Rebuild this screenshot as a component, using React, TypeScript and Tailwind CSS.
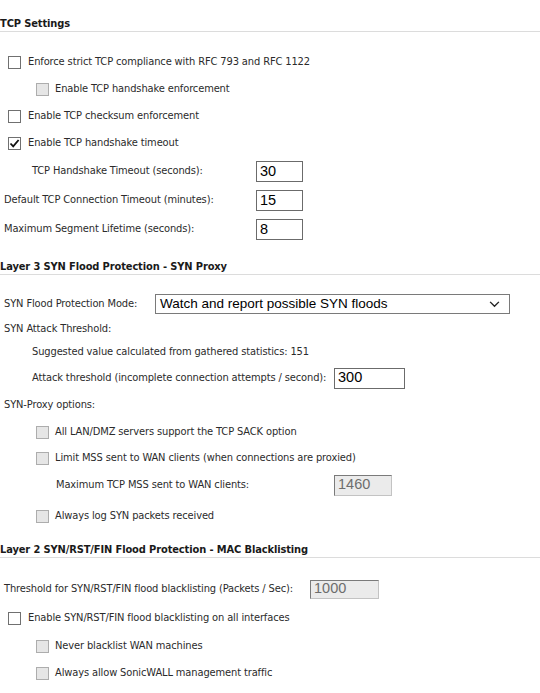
import React from 'react';

const labelFont = { fontFamily: '"DejaVu Sans Condensed", "Liberation Sans", sans-serif' };

type BoxProps = { checked?: boolean; disabled?: boolean };

const Box: React.FC<BoxProps> = ({ checked, disabled }) => (
  <span
    className={
      'relative inline-block w-[13px] h-[13px] shrink-0 border ' +
      (disabled ? 'bg-[#e6e6e6] border-[#adadad]' : 'bg-white border-[#707070]')
    }
  >
    {checked && (
      <svg viewBox="0 0 13 13" className="absolute left-[-1px] top-[-1px] w-[13px] h-[13px]">
        <path d="M2.5 6.5 L5.2 9.4 L10.6 3" fill="none" stroke="#111" strokeWidth="1.8" />
      </svg>
    )}
  </span>
);

const CheckRow: React.FC<BoxProps & { label: string; indent?: boolean; h: string }> = ({ label, indent, h, ...box }) => (
  <div className={`flex items-center ${h} ${indent ? 'pl-[36px]' : 'pl-[8px]'}`}>
    <Box {...box} />
    <span className={indent ? 'ml-[6px]' : 'ml-[7px]'}>{label}</span>
  </div>
);

const Heading: React.FC<{ title: string; pt: string }> = ({ title, pt }) => (
  <div className={`${pt} leading-[15px] font-bold text-[#1a1a1a] border-b border-[#dcdcdc]`}>{title}</div>
);

const TextBox: React.FC<{ value: string; w: string; disabled?: boolean; h?: string }> = ({ value, w, disabled, h = 'h-[21px]' }) => (
  <div
    className={
      `${w} ${h} flex items-center pl-[3px] text-[14.5px] tracking-normal ` +
      (disabled
        ? 'bg-[#ebebeb] text-[#6d6d6d] border border-[#c3c3c3] border-t-[#7a7a7a] border-l-[#7a7a7a]'
        : 'bg-white text-black border border-[#6b6b6b]')
    }
    style={{ fontFamily: '"Liberation Sans", Arial, sans-serif' }}
  >
    {value}
  </div>
);

const FieldRow: React.FC<{ label: string; value: string; labelW: string; pl: string; h: string; inputW: string; disabled?: boolean; inputH?: string }> = ({
  label,
  value,
  labelW,
  pl,
  h,
  inputW,
  disabled,
  inputH,
}) => (
  <div className={`flex items-center ${h}`}>
    <div className={`${labelW} ${pl} shrink-0`}>{label}</div>
    <TextBox value={value} w={inputW} disabled={disabled} h={inputH} />
  </div>
);

export default function App() {
  return (
    <div className="w-[540px] h-[693px] bg-white text-[11px] tracking-[-0.12px] text-[#2b2b2b] overflow-hidden" style={labelFont}>
      <Heading title="TCP Settings" pt="pt-[16px]" />

      <div className="mt-[17px]">
        <CheckRow h="h-[27px]" label="Enforce strict TCP compliance with RFC 793 and RFC 1122" />
        <CheckRow h="h-[27px]" indent disabled label="Enable TCP handshake enforcement" />
        <CheckRow h="h-[27px]" label="Enable TCP checksum enforcement" />
        <CheckRow h="h-[27px]" checked label="Enable TCP handshake timeout" />
      </div>

      <FieldRow h="h-[29px]" labelW="w-[256px]" pl="pl-[32px]" inputW="w-[47px]" label="TCP Handshake Timeout (seconds):" value="30" />
      <FieldRow h="h-[29px]" labelW="w-[256px]" pl="pl-[4px]" inputW="w-[47px]" label="Default TCP Connection Timeout (minutes):" value="15" />
      <FieldRow h="h-[29px]" labelW="w-[256px]" pl="pl-[4px]" inputW="w-[47px]" label="Maximum Segment Lifetime (seconds):" value="8" />

      <Heading title="Layer 3 SYN Flood Protection - SYN Proxy" pt="pt-[15px]" />

      <div className="mt-[15px] flex items-center h-[28px]">
        <div className="w-[155px] pl-[4px] shrink-0">SYN Flood Protection Mode:</div>
        <div
          className="w-[355px] h-[20px] border border-[#7a7a7a] bg-white flex items-center justify-between pl-[4px] pr-[9px] text-[13.5px] tracking-normal text-black"
          style={{ fontFamily: '"Liberation Sans", Arial, sans-serif' }}
        >
          <span>Watch and report possible SYN floods</span>
          <svg viewBox="0 0 12 8" className="w-[11px] h-[7px]">
            <path d="M1 1 L6 6 L11 1" fill="none" stroke="#222" strokeWidth="1.6" />
          </svg>
        </div>
      </div>
      <div className="flex items-center h-[22px] pl-[4px]">SYN Attack Threshold:</div>
      <div className="flex items-center h-[24px] pl-[32px]">Suggested value calculated from gathered statistics: 151</div>
      <FieldRow h="h-[28px]" labelW="w-[334px]" pl="pl-[32px]" inputW="w-[71px]" label="Attack threshold (incomplete connection attempts / second):" value="300" />
      <div className="flex items-center h-[26px] pl-[4px]">SYN-Proxy options:</div>
      <CheckRow h="h-[28px]" indent disabled label="All LAN/DMZ servers support the TCP SACK option" />
      <CheckRow h="h-[25px]" indent disabled label="Limit MSS sent to WAN clients (when connections are proxied)" />
      <FieldRow h="h-[28px]" labelW="w-[334px]" pl="pl-[56px]" inputW="w-[58px]" disabled label="Maximum TCP MSS sent to WAN clients:" value="1460" />
      <CheckRow h="h-[34px]" indent disabled label="Always log SYN packets received" />

      <Heading title="Layer 2 SYN/RST/FIN Flood Protection - MAC Blacklisting" pt="pt-[9px]" />

      <FieldRow
        h="mt-[17px] h-[28px]"
        labelW="w-[310px]"
        pl="pl-[4px]"
        inputW="w-[69px]"
        inputH="h-[19px]"
        disabled
        label="Threshold for SYN/RST/FIN flood blacklisting (Packets / Sec):"
        value="1000"
      />
      <CheckRow h="h-[30px]" label="Enable SYN/RST/FIN flood blacklisting on all interfaces" />
      <CheckRow h="h-[26px]" indent disabled label="Never blacklist WAN machines" />
      <CheckRow h="h-[28px]" indent disabled label="Always allow SonicWALL management traffic" />
    </div>
  );
}
